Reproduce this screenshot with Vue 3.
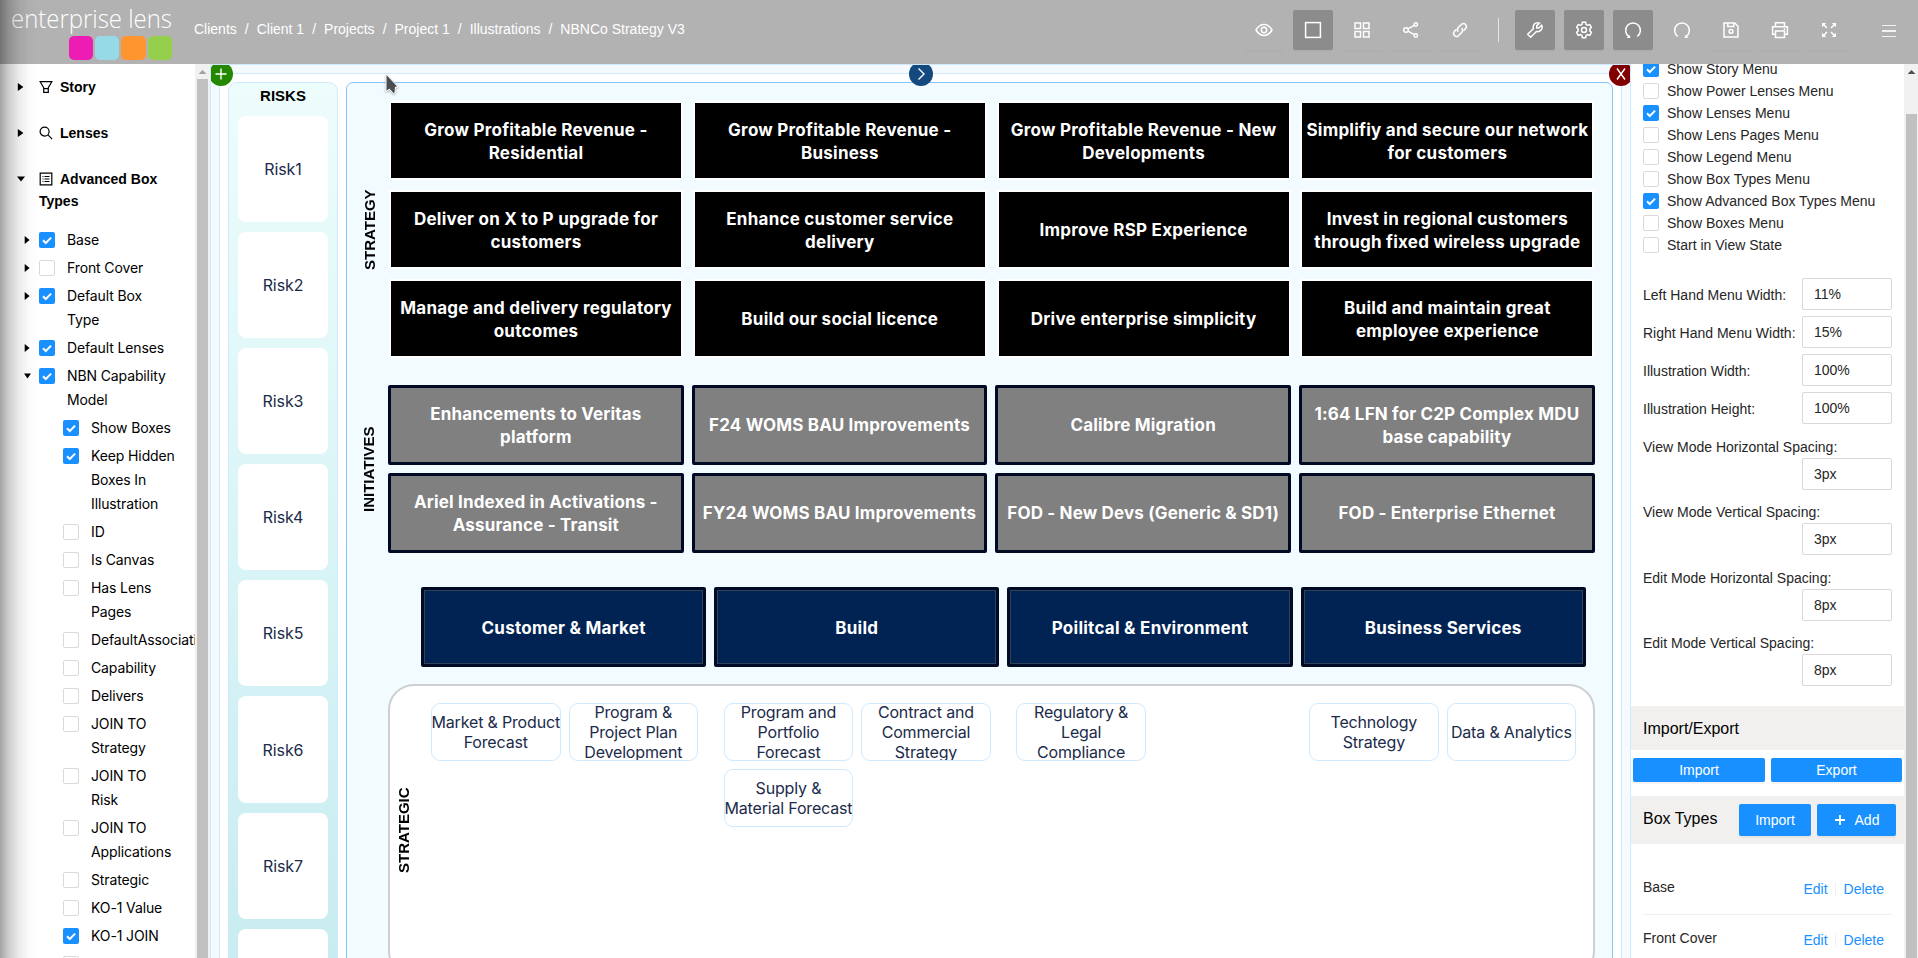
<script setup>
const crumbs = ['Clients', 'Client 1', 'Projects', 'Project 1', 'Illustrations', 'NBNCo Strategy V3']

const tools = [
  { icon: 'eye' },
  { icon: 'square', active: true },
  { icon: 'grid' },
  { icon: 'share' },
  { icon: 'link' },
  { icon: 'divider' },
  { icon: 'wrench', active: true },
  { icon: 'gear', active: true },
  { icon: 'undo', active: true },
  { icon: 'redo', flat: true },
  { icon: 'save' },
  { icon: 'print' },
  { icon: 'expand' },
]

const tree = [
  { text: 'Base', on: true, arrow: 'right' },
  { text: 'Front Cover', on: false, arrow: 'right' },
  { text: 'Default Box\nType', on: true, arrow: 'right' },
  { text: 'Default Lenses', on: true, arrow: 'right' },
  { text: 'NBN Capability\nModel', on: true, arrow: 'down' },
  { text: 'Show Boxes', on: true, child: true },
  { text: 'Keep Hidden\nBoxes In\nIllustration', on: true, child: true },
  { text: 'ID', child: true },
  { text: 'Is Canvas', child: true },
  { text: 'Has Lens\nPages', child: true },
  { text: 'DefaultAssociati', child: true },
  { text: 'Capability', child: true },
  { text: 'Delivers', child: true },
  { text: 'JOIN TO\nStrategy', child: true },
  { text: 'JOIN TO\nRisk', child: true },
  { text: 'JOIN TO\nApplications', child: true },
  { text: 'Strategic', child: true },
  { text: 'KO-1 Value', child: true },
  { text: 'KO-1 JOIN', on: true, child: true },
  { text: '', child: true },
]

const risks = ['Risk1', 'Risk2', 'Risk3', 'Risk4', 'Risk5', 'Risk6', 'Risk7', '']

const strategy = [
  'Grow Profitable Revenue -\nResidential',
  'Grow Profitable Revenue -\nBusiness',
  'Grow Profitable Revenue - New\nDevelopments',
  'Simplifiy and secure our network\nfor customers',
  'Deliver on X to P upgrade for\ncustomers',
  'Enhance customer service\ndelivery',
  'Improve RSP Experience',
  'Invest in regional customers\nthrough fixed wireless upgrade',
  'Manage and delivery regulatory\noutcomes',
  'Build our social licence',
  'Drive enterprise simplicity',
  'Build and maintain great\nemployee experience',
]

const initiatives = [
  'Enhancements to Veritas\nplatform',
  'F24 WOMS BAU Improvements',
  'Calibre Migration',
  '1:64 LFN for C2P Complex MDU\nbase capability',
  'Ariel Indexed in Activations -\nAssurance - Transit',
  'FY24 WOMS BAU Improvements',
  'FOD - New Devs (Generic & SD1)',
  'FOD - Enterprise Ethernet',
]

const pillars = ['Customer & Market', 'Build', 'Poilitcal & Environment', 'Business Services']

const capabilities = [
  ['Market & Product\nForecast', 'Program &\nProject Plan\nDevelopment'],
  ['Program and\nPortfolio\nForecast', 'Contract and\nCommercial\nStrategy', 'Supply &\nMaterial Forecast'],
  ['Regulatory &\nLegal\nCompliance'],
  ['Technology\nStrategy', 'Data & Analytics'],
]

const options = [
  ['Show Story Menu', true],
  ['Show Power Lenses Menu', false],
  ['Show Lenses Menu', true],
  ['Show Lens Pages Menu', false],
  ['Show Legend Menu', false],
  ['Show Box Types Menu', false],
  ['Show Advanced Box Types Menu', true],
  ['Show Boxes Menu', false],
  ['Start in View State', false],
]

const sizes = [
  ['Left Hand Menu Width:', '11%'],
  ['Right Hand Menu Width:', '15%'],
  ['Illustration Width:', '100%'],
  ['Illustration Height:', '100%'],
]

const spacings = [
  ['View Mode Horizontal Spacing:', '3px'],
  ['View Mode Vertical Spacing:', '3px'],
  ['Edit Mode Horizontal Spacing:', '8px'],
  ['Edit Mode Vertical Spacing:', '8px'],
]

const boxTypes = ['Base', 'Front Cover']
</script>

<template>
  <div class="app">
    <header class="header">
      <div class="logo">
        <svg class="wordmark" width="162" height="32" viewBox="0 0 162 32">
          <text x="-1" y="24" textLength="161" lengthAdjust="spacingAndGlyphs">enterprise lens</text>
        </svg>
        <div class="swatches"><i class="pink"></i><i class="aqua"></i><i class="orange"></i><i class="green"></i></div>
      </div>
      <nav class="crumbs">
        <template v-for="(c, i) in crumbs" :key="c">
          <span v-if="i" class="sep">/</span><span>{{ c }}</span>
        </template>
      </nav>
      <div class="tools">
        <template v-for="t in tools" :key="t.icon">
          <i v-if="t.icon === 'divider'" class="divider"></i>
          <span v-else class="tool" :class="{ active: t.active, flat: t.flat }">
            <svg width="18" height="18" viewBox="0 0 18 18">
              <g v-if="t.icon === 'eye'"><path d="M1 9C3.2 5.200 5.800 3.600 9 3.600S14.800 5.200 17 9c-2.200 3.800-4.800 5.400-8 5.400S3.200 12.800 1 9z" /><circle cx="9" cy="9" r="2.700" /></g>
              <rect v-else-if="t.icon === 'square'" x="1.600" y="1.600" width="14.800" height="14.800" />
              <g v-else-if="t.icon === 'grid'"><rect x="2" y="2" width="5.500" height="5.500" /><rect x="10.500" y="2" width="5.500" height="5.500" /><rect x="2" y="10.500" width="5.500" height="5.500" /><rect x="10.500" y="10.500" width="5.500" height="5.500" /></g>
              <g v-else-if="t.icon === 'share'"><circle cx="4" cy="9" r="2.300" /><circle cx="13.800" cy="3.500" r="1.700" /><circle cx="13.800" cy="14.500" r="1.700" /><path d="M6 7.900l6.300-3.600M6 10.100l6.300 3.600" /></g>
              <g v-else-if="t.icon === 'link'"><path d="M7.300 10.700a3 3 0 0 1 0-4.200l3.300-3.300a3 3 0 0 1 4.200 4.200l-2.100 2.100" /><path d="M10.700 7.300a3 3 0 0 1 0 4.200l-3.300 3.300a3 3 0 0 1-4.200-4.200l2.100-2.100" /></g>
              <path v-else-if="t.icon === 'wrench'" d="M15.700 4.200l-2.900 2.900-2-.1-.1-2.100 2.800-2.800C11.400 1.300 9.400 1.900 8.200 3.300c-1 1.200-1.200 2.800-.7 4.200l-5.800 5.800 2.900 2.900 5.900-5.800c1.500.5 3.100.1 4.200-1 1.400-1.400 1.800-3.400 1-5.200z" />
              <g v-else-if="t.icon === 'gear'"><path d="M7.400 1.200h3.200l.5 2.200 1.500.9 2.200-.7 1.600 2.800-1.600 1.600v1.900l1.600 1.600-1.600 2.800-2.200-.7-1.500.9-.5 2.200H7.400l-.5-2.200-1.500-.9-2.200.7-1.600-2.800 1.600-1.600V8L1.600 6.400l1.600-2.800 2.200.7 1.500-.9z" /><circle cx="9" cy="9" r="2.500" /></g>
              <g v-else-if="t.icon === 'undo'"><path d="M4.900 15.500A7.400 7.400 0 1 1 13.100 15.500" /><path class="fill" d="M2.600 16.700l4 .2-1.300-3.200z" /></g>
              <g v-else-if="t.icon === 'redo'"><path d="M4.900 15.500A7.400 7.400 0 1 1 13.100 15.500" /><path class="fill" d="M15.400 16.700l-4 .2 1.300-3.200z" /></g>
              <g v-else-if="t.icon === 'save'"><path d="M2 2h10.700L16 5.300V16H2zM5.800 2v3.500h6V2" /><circle cx="9" cy="10.400" r="1.900" /></g>
              <g v-else-if="t.icon === 'print'"><path d="M4.500 5.500V1.700h9v3.800M4.500 13.300H1.600V5.700h14.800v7.600h-2.900" /><rect x="4.500" y="10" width="9" height="6.500" /><path d="M12.700 8h1.400" /></g>
              <g v-else-if="t.icon === 'expand'"><path d="M3 3l4 4M15 3l-4 4M3 15l4-4M15 15l-4-4" /><path class="fill" d="M2 2h4.200L2 6.200zM16 2h-4.200L16 6.200zM2 16h4.200L2 11.800zM16 16h-4.200L16 11.800z" /></g>
            </svg>
          </span>
        </template>
        <span class="burger"><i></i><i></i><i></i></span>
      </div>
    </header>

    <div class="body">
      <aside class="side">
        <div class="side-main">
          <div class="head">
            <i class="tri right"></i>
            <div class="head-text">
              <svg width="14" height="14" viewBox="0 0 14 14"><path d="M1.200 1.700h11.600L9.300 7.600v4.700H4.700V7.600zM4.800 8.600h4.400" /></svg>Story
            </div>
          </div>
          <div class="head">
            <i class="tri right"></i>
            <div class="head-text">
              <svg width="14" height="14" viewBox="0 0 14 14"><circle cx="5.600" cy="5.600" r="4.500" /><path d="M8.900 8.900l4.300 4.300" /></svg>Lenses
            </div>
          </div>
          <div class="head">
            <i class="tri down"></i>
            <div class="head-text">
              <svg width="14" height="14" viewBox="0 0 14 14"><path d="M1.200 1.200h11.600v11.600H1.200zM5.500 4.500h5M5.500 7h5M5.500 9.500h5M3.500 4.500h1M3.500 7h1M3.500 9.500h1" /></svg>Advanced Box<br />Types
            </div>
          </div>
          <div class="tree">
            <div v-for="(n, i) in tree" :key="i" class="node" :class="{ child: n.child }">
              <i v-if="n.arrow" class="tri small" :class="n.arrow"></i>
              <span class="check" :class="{ on: n.on }"><svg v-if="n.on" width="16" height="16" viewBox="0 0 16 16"><path d="M4 8.200l2.800 2.800 5.300-5.400" /></svg></span>
              <span class="node-text">{{ n.text }}</span>
            </div>
          </div>
        </div>
        <div class="scroll left-scroll"><i class="up"></i><i class="thumb"></i></div>
      </aside>

      <main class="canvas">
        <span class="badge add"><svg width="24" height="24" viewBox="0 0 24 24"><path d="M12 6.500v11M6.500 12h11" /></svg></span>
        <span class="badge next"><svg width="24" height="24" viewBox="0 0 24 24"><path d="M9.500 6.500l5.500 5.500-5.500 5.500" /></svg></span>
        <span class="badge close"><svg width="24" height="24" viewBox="0 0 24 24"><path d="M8 6.500l8 11M16 6.500l-8 11" /></svg></span>
        <svg class="pointer" width="18" height="26" viewBox="0 0 18 26"><path d="M2 2v17.500l3.500-2.400 3.800 4.400 1.800-.8.300-5.700h2.800z" /></svg>
        <div class="sheet">
          <section class="risks">
            <h3>RISKS</h3>
            <div v-for="(r, i) in risks" :key="i" class="risk">{{ r }}</div>
          </section>
          <section class="board">
            <div class="band">
              <span class="vlabel">STRATEGY</span>
              <div class="strategy-grid"><div v-for="s in strategy" :key="s" class="box black">{{ s }}</div></div>
            </div>
            <div class="band initiatives">
              <span class="vlabel">INITIATIVES</span>
              <div class="initiative-grid"><div v-for="s in initiatives" :key="s" class="box grey">{{ s }}</div></div>
            </div>
            <div class="pillars"><div v-for="s in pillars" :key="s" class="box navy">{{ s }}</div></div>
            <div class="panel">
              <span class="vlabel">STRATEGIC</span>
              <div class="groups">
                <div v-for="(g, i) in capabilities" :key="i" class="group">
                  <div v-for="c in g" :key="c" class="cap">{{ c }}</div>
                </div>
              </div>
            </div>
          </section>
        </div>
      </main>

      <aside class="settings">
        <div class="settings-main">
          <div class="options">
            <div v-for="o in options" :key="o[0]" class="option">
              <span class="check" :class="{ on: o[1] }"><svg v-if="o[1]" width="16" height="16" viewBox="0 0 16 16"><path d="M4 8.200l2.800 2.800 5.300-5.400" /></svg></span>{{ o[0] }}
            </div>
          </div>
          <div v-for="s in sizes" :key="s[0]" class="size"><span>{{ s[0] }}</span><span class="input">{{ s[1] }}</span></div>
          <div class="spacings">
            <div v-for="s in spacings" :key="s[0]" class="spacing"><span>{{ s[0] }}</span><span class="input">{{ s[1] }}</span></div>
          </div>
          <h4 class="bar">Import/Export</h4>
          <div class="pair"><span class="btn">Import</span><span class="btn">Export</span></div>
          <h4 class="bar tall"><span>Box Types</span>
            <span class="bar-actions"><span class="btn import">Import</span><span class="btn plus"><svg width="12" height="12" viewBox="0 0 12 12"><path d="M6 1v10M1 6h10" /></svg>Add</span></span>
          </h4>
          <div class="types">
            <div v-for="b in boxTypes" :key="b" class="type">
              <span>{{ b }}</span>
              <span class="links"><a>Edit</a><i></i><a>Delete</a></span>
            </div>
          </div>
        </div>
        <div class="scroll right-scroll"><i class="up"></i><i class="thumb"></i></div>
      </aside>
      <div class="edge"></div>
    </div>
    <div class="edge over-header"></div>
  </div>
</template>

<style>
body { margin: 0; overflow: hidden; }
</style>

<style scoped>
.app, .app * { box-sizing: border-box; }
.app { position: relative; width: 1918px; height: 958px; overflow: hidden; background: #fff; font: 14px/22px "Liberation Sans", Arial, sans-serif; color: #262626; display: flex; flex-direction: column; }
svg { display: block; fill: none; stroke: currentColor; }
i { display: block; flex: none; }

.header { height: 64px; flex: none; background: #b2b2b2; display: flex; color: #fff; }
.logo { width: 194px; flex: none; padding: 4px 0 0 12px; }
.wordmark { height: 32px; overflow: visible; }
.wordmark text { font: 300 26px "Open Sans", sans-serif; fill: #fff; stroke: none; }
.swatches { display: flex; gap: 2px; padding-left: 57px; }
.swatches i { width: 24.200px; height: 24px; border-radius: 5px; }
.pink { background: #ec1cb4; }
.aqua { background: #95dae6; }
.orange { background: #ff952f; }
.green { background: #96cf4b; }
.crumbs { height: 58px; display: flex; align-items: center; white-space: pre; }
.sep { margin: 0 8px; }
.tools { margin-left: auto; padding: 10px 22px 0 0; display: flex; height: 60px; }
.tool { width: 40px; height: 40px; margin-right: 9px; border-radius: 2px; display: flex; align-items: center; justify-content: center; box-shadow: 0 2px 0 rgba(0, 0, 0, .02); }
.tool.flat { box-shadow: none; }
.tool.active { background: #8c8c8c; }
.tool svg { stroke-width: 1.500; }
.tool .fill { fill: #fff; stroke: none; }
.divider { width: 1px; height: 24px; background: #e4e4e4; margin: 8px 16.500px 0 9px; }
.burger { width: 14px; margin-left: 24px; padding-top: 14.500px; display: flex; flex-direction: column; gap: 4px; }
.burger i { height: 1.500px; background: #f2f2f2; }

.body { flex: 1; min-height: 0; display: flex; }
.edge { position: absolute; left: 0; top: 64px; bottom: 0; width: 38px; background: linear-gradient(90deg, rgba(0, 0, 0, .36), rgba(0, 0, 0, .2) 22%, rgba(0, 0, 0, .08) 50%, rgba(0, 0, 0, .02) 75%, transparent); pointer-events: none; }
.edge.over-header { top: 0; bottom: auto; height: 64px; }

.side { width: 210px; flex: none; display: flex; overflow: hidden; color: #000; }
.side-main { width: 195px; flex: none; overflow: hidden; }
.head { display: flex; padding: 12px 0 12px 17px; font-weight: 700; }
.head .tri { margin-top: 6px; }
.head-text { margin-left: 14px; }
.head-text svg { display: inline-block; vertical-align: -2px; margin-right: 7px; stroke-width: 1.200; }
.tri { width: 8px; height: 10px; background: #000; }
.tri.right { clip-path: polygon(10% 10%, 80% 50%, 10% 90%); }
.tri.down { clip-path: polygon(0 25%, 100% 25%, 50% 75%); }
.tree { padding-top: 4px; font: 14px/24px Inter, sans-serif; letter-spacing: -.12px; }
.node { display: flex; margin-bottom: 4px; padding-left: 39px; position: relative; white-space: pre; }
.node.child { padding-left: 63px; }
.tri.small { position: absolute; left: 24px; top: 7px; width: 7px; }
.check { width: 16px; height: 16px; flex: none; border: 1px solid #d9d9d9; border-radius: 2px; background: #fff; }
.check.on { background: #1890ff; border: 0; color: #fff; }
.check svg { stroke-width: 2; }
.node .check { margin: 4px 12px 0 0; }

.scroll { background: #f1f1f1; display: flex; flex-direction: column; }
.scroll .up { width: 8px; height: 4px; margin: 6px 0 5px 3.500px; clip-path: polygon(50% 0, 100% 100%, 0 100%); background: #a3a3a3; }
.thumb { flex: 1; background: #c1c1c1; }
.left-scroll { width: 15px; padding: 0 2px; }
.left-scroll .up { margin-left: 1.500px; }
.right-scroll { width: 14px; padding: 0 1px 0 2px; }
.right-scroll .up { background: #505050; margin: 6px 0 40px 1.500px; }

.canvas { position: relative; width: 1421px; flex: none; overflow: hidden; border: 1px solid #cfeaff; border-bottom: 0; background: #f5faff; padding: 8px 8px 0; }
.sheet { height: 1000px; background: #fff; border: 1px solid #cfeaff; padding: 8px 8px 0; display: flex; gap: 8px; }
.badge { position: absolute; top: -3px; width: 24px; height: 24px; border-radius: 50%; color: #fff; z-index: 2; }
.badge svg { stroke-width: 1.400; }
.add { left: -2.500px; background: #248800; }
.next { left: 698px; background: #14497f; }
.close { left: 1398px; background: #800000; }
.pointer { position: absolute; left: 173px; top: 7px; z-index: 2; fill: #4a4d4d; stroke: #fff; filter: drop-shadow(0 1px 1px rgba(0, 0, 0, .3)); }

.risks { width: 110px; flex: none; height: 960px; border: 1px solid #cfeaff; border-radius: 9px; background: linear-gradient(#edfdfc, #c8ecf1 92%); display: flex; flex-direction: column; align-items: center; gap: 10px; }
.risks h3 { margin: 0; height: 23px; font-size: 15px; line-height: 26px; color: #000; }
.risk { width: 90px; height: 106.100px; flex: none; border-radius: 8px; background: #fff; color: #202b4a; display: flex; align-items: center; justify-content: center; font: 16px/20px Inter, sans-serif; letter-spacing: -.1px; }

.board { width: 1267px; flex: none; border: 1px solid #85c3fb; border-radius: 7px; background: #f2fbff; padding: 18px 0 0; height: 960px; }
.band { display: flex; }
.vlabel { width: 42px; flex: none; writing-mode: vertical-rl; transform: rotate(180deg); text-align: center; font: 700 15px/46px "Liberation Sans", Arial, sans-serif; color: #000; }
.strategy-grid { display: grid; grid-template-columns: repeat(4, 294px); gap: 10px 9.800px; }
.box { display: flex; align-items: center; justify-content: center; text-align: center; white-space: pre; color: #fff; font: 700 17px/23px Inter, sans-serif; letter-spacing: .25px; padding-top: 2px; }
.black { height: 79px; background: #000; border: 2px solid #fff; }
.initiatives { margin: 27px 0 0 -1px; }
.initiative-grid { display: grid; grid-template-columns: repeat(4, 295.700px); gap: 8px; }
.grey { height: 80px; background: #808080; border: 3px solid #000a24; border-radius: 2px; letter-spacing: .16px; padding-top: 1px; }
.pillars { display: flex; gap: 8px; margin: 34px 0 0 74px; }
.navy { width: 285.200px; height: 80px; background: #002353; border: 3px solid #000a24; border-radius: 2px; box-shadow: inset 0 0 0 1px #2f4258; }
.panel { margin: 16.500px 0 0 41px; width: 1207px; height: 293px; border: 2px solid #cdcfd0; border-radius: 26px; background: #fff; display: flex; }
.panel .vlabel { width: 27px; line-height: 27px; }
.groups { display: flex; padding: 17.500px 0 0 14px; }
.group { width: 292.700px; display: grid; grid-template-columns: 129.500px 129.500px; grid-auto-rows: 58px; gap: 8px; align-content: start; }
.cap { border: 1px solid #cfeaff; border-radius: 9px; overflow: hidden; display: flex; align-items: center; justify-content: center; text-align: center; white-space: pre; font: 16px/20px Inter, sans-serif; letter-spacing: -.17px; color: #202b4a; }

.settings { flex: 1; display: flex; }
.settings-main { width: 273px; flex: none; overflow: hidden; }
.options { height: 214px; padding: 0 12px; margin-top: -6px; }
.option { height: 22px; display: flex; align-items: center; gap: 8px; white-space: pre; }
.size { padding: 0 12px; display: flex; justify-content: space-between; height: 38px; line-height: 34px; white-space: pre; }
.options + .size { margin-top: 6px; }
.input { width: 90px; height: 32px; border: 1px solid #d9d9d9; border-radius: 2px; padding-left: 11px; line-height: 30px; }
.spacings { padding: 6px 12px 0; height: 276px; }
.spacing { height: 65.330px; display: flex; flex-direction: column; }
.spacing .input { align-self: flex-end; }
.bar { margin: 0; height: 44px; padding: 2px 8px 0 12px; background: #f1f0ef; font-size: 16px; font-weight: 400; color: #000; display: flex; align-items: center; justify-content: space-between; }
.bar.tall { height: 48px; margin-top: 14px; padding-top: 0; }
.bar.tall > span:first-child { padding-bottom: 2px; }
.pair { display: grid; grid-template-columns: 132px 131px; gap: 6px; padding: 8px 2px 0; }
.btn { height: 24px; border-radius: 2px; background: #1890ff; color: #fff; font-size: 14px; display: flex; align-items: center; justify-content: center; box-shadow: 0 2px 0 rgba(0, 0, 0, .045); }
.bar-actions { display: flex; gap: 6px; }
.bar-actions .btn { height: 32px; }
.import { width: 72px; }
.plus { width: 79px; gap: 9px; }
.plus svg { stroke-width: 1.800; }
.types { padding: 20px 12px 0; }
.type { height: 51px; border-bottom: 1px solid #f0f0f0; display: flex; justify-content: space-between; align-items: center; padding-bottom: 5px; }
.links { display: flex; align-items: center; color: #1890ff; padding: 4px 8px 0 0; }
.links i { width: 1px; height: 14px; background: #f0f0f0; margin: 0 8px 0 7px; }
</style>
